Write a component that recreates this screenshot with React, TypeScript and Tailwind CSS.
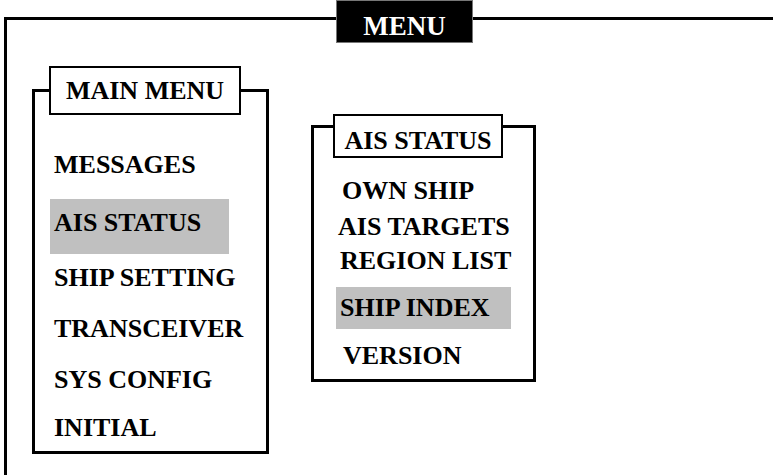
const MAIN_ITEMS: { label: string; cls: string; active?: boolean }[] = [
  { label: 'MESSAGES', cls: 'mt-[37px]' },
  { label: 'AIS STATUS', cls: 'mt-[21px] pt-[11px] pb-[18px] w-[179px]', active: true },
  { label: 'SHIP SETTING', cls: 'mt-[11px]' },
  { label: 'TRANSCEIVER', cls: 'mt-[25px]' },
  { label: 'SYS CONFIG', cls: 'mt-[25px]' },
  { label: 'INITIAL', cls: 'mt-[22px]' },
]

const AIS_ITEMS: { label: string; cls: string; active?: boolean }[] = [
  { label: 'OWN SHIP', cls: 'mt-[20px] pl-[6px]' },
  { label: 'AIS TARGETS', cls: 'mt-[10px] pl-[2px]' },
  { label: 'REGION LIST', cls: 'mt-[8px] pl-[4px]' },
  { label: 'SHIP INDEX', cls: 'mt-[13px] pl-[4px] pt-[8px] pb-[8px] w-[175px]', active: true },
  { label: 'VERSION', cls: 'mt-[14px] pl-[7px]' },
]

function Item({ label, cls, active }: { label: string; cls: string; active?: boolean }) {
  return (
    <div className={`${cls} whitespace-nowrap leading-[26px] ${active ? 'bg-[#c0c0c0]' : ''}`}>
      {label}
    </div>
  )
}

export default function App() {
  return (
    <div
      className="flex h-[475px] w-[773px] flex-col overflow-hidden bg-white pl-[4px] text-[26px] font-bold text-black"
      style={{ fontFamily: '"Liberation Serif", "Times New Roman", serif' }}
    >
      {/* outer frame header */}
      <div className="flex h-[43px] shrink-0">
        <div className="h-[26px] w-[332px] self-end border-l-[3px] border-t-[3px] border-black" />
        <div className="flex h-[43px] w-[137px] justify-center border border-[#777] bg-black pt-[12px] text-[27px] leading-[27px] text-white">
          MENU
        </div>
        <div className="h-[26px] flex-1 self-end border-t-[3px] border-black" />
      </div>

      {/* outer frame body */}
      <div className="flex flex-1 items-start gap-[42px] border-l-[3px] border-black pl-[25px] pt-[23px]">
        {/* main menu */}
        <div className="flex w-[237px] flex-col">
          <div className="flex">
            <div className="h-[26px] w-[17px] self-end border-l-[3px] border-t-[3px] border-black" />
            <div className="flex h-[49px] w-[192px] items-center justify-center border-2 border-black leading-[26px]">
              MAIN MENU
            </div>
            <div className="h-[26px] flex-1 self-end border-r-[3px] border-t-[3px] border-black" />
          </div>
          <div className="flex flex-col items-start border-x-[3px] border-b-[3px] border-black pb-[10px] pl-[15px]">
            {MAIN_ITEMS.map((it) => (
              <Item key={it.label} {...it} cls={`${it.cls} px-[4px]`} />
            ))}
          </div>
        </div>

        {/* ais status submenu */}
        <div className="mt-[48px] flex w-[225px] flex-col">
          <div className="flex">
            <div className="h-[33px] w-[22px] self-end border-l-[3px] border-t-[3px] border-black" />
            <div className="flex h-[44px] w-[170px] justify-center border-2 border-black pt-[12px] leading-[26px]">
              AIS STATUS
            </div>
            <div className="h-[33px] flex-1 self-end border-r-[3px] border-t-[3px] border-black" />
          </div>
          <div className="flex flex-col items-start border-x-[3px] border-b-[3px] border-black pb-[10px] pl-[22px]">
            {AIS_ITEMS.map((it) => (
              <Item key={it.label} {...it} />
            ))}
          </div>
        </div>
      </div>
    </div>
  )
}
